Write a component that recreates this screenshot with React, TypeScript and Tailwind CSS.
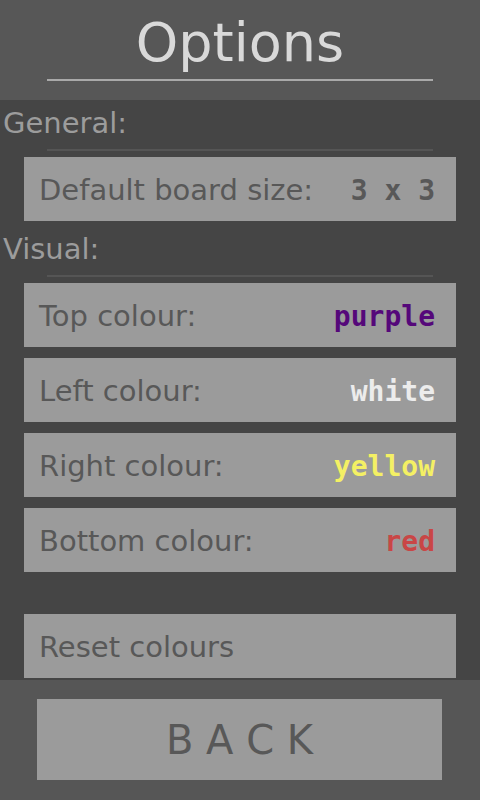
import React from 'react';

const font = "font-['DejaVu_Sans',sans-serif]";
const mono = "font-['DejaVu_Sans_Mono',monospace]";

interface RowProps {
  label: string;
  value?: string;
  valueClass?: string;
}

const OptionRow: React.FC<RowProps> = ({ label, value, valueClass }) => (
  <div className="mx-[24px] h-[64px] bg-[#9b9b9b] flex items-center justify-between pl-[15px] pr-[21px] pt-[4px]">
    <span className={`${font} text-[29px] text-[#585858]`}>{label}</span>
    {value && <span className={`${mono} font-bold text-[28px] ${valueClass}`}>{value}</span>}
  </div>
);

const SectionLabel: React.FC<{ text: string }> = ({ text }) => (
  <div>
    <div className={`${font} text-[29px] leading-[46px] text-[#9c9c9c] pl-[3px]`}>{text}</div>
    <div className="mx-[47px] mt-[3px] h-[2px] bg-[#555555]"></div>
  </div>
);

export default function App() {
  return (
    <div className="w-[480px] h-[800px] flex flex-col bg-[#454545] overflow-hidden">
      <header className="h-[100px] bg-[#575757] pt-[12px]">
        <h1 className={`${font} text-[54px] leading-[62px] text-center text-[#d9d9d9]`}>Options</h1>
        <div className="mx-[47px] mt-[5px] h-[2px] bg-[#a9a9a9]"></div>
      </header>

      <main className="flex-1 flex flex-col">
        <SectionLabel text="General:" />
        <div className="mt-[6px]">
          <OptionRow label="Default board size:" value="3 x 3" valueClass="text-[#585858]" />
        </div>

        <div className="mt-[5px]">
          <SectionLabel text="Visual:" />
        </div>
        <div className="mt-[6px] flex flex-col gap-[11px]">
          <OptionRow label="Top colour:" value="purple" valueClass="text-[#55087a]" />
          <OptionRow label="Left colour:" value="white" valueClass="text-[#ececec]" />
          <OptionRow label="Right colour:" value="yellow" valueClass="text-[#f4f064]" />
          <OptionRow label="Bottom colour:" value="red" valueClass="text-[#c94646]" />
        </div>

        <div className="mt-[42px]">
          <OptionRow label="Reset colours" />
        </div>
      </main>

      <footer className="h-[120px] bg-[#565656] px-[37px] pt-[19px]">
        <button className={`w-[405px] h-[81px] bg-[#9b9b9b] ${font} text-[40px] text-[#585858] flex items-center justify-center`}>
          B A C K
        </button>
      </footer>
    </div>
  );
}
